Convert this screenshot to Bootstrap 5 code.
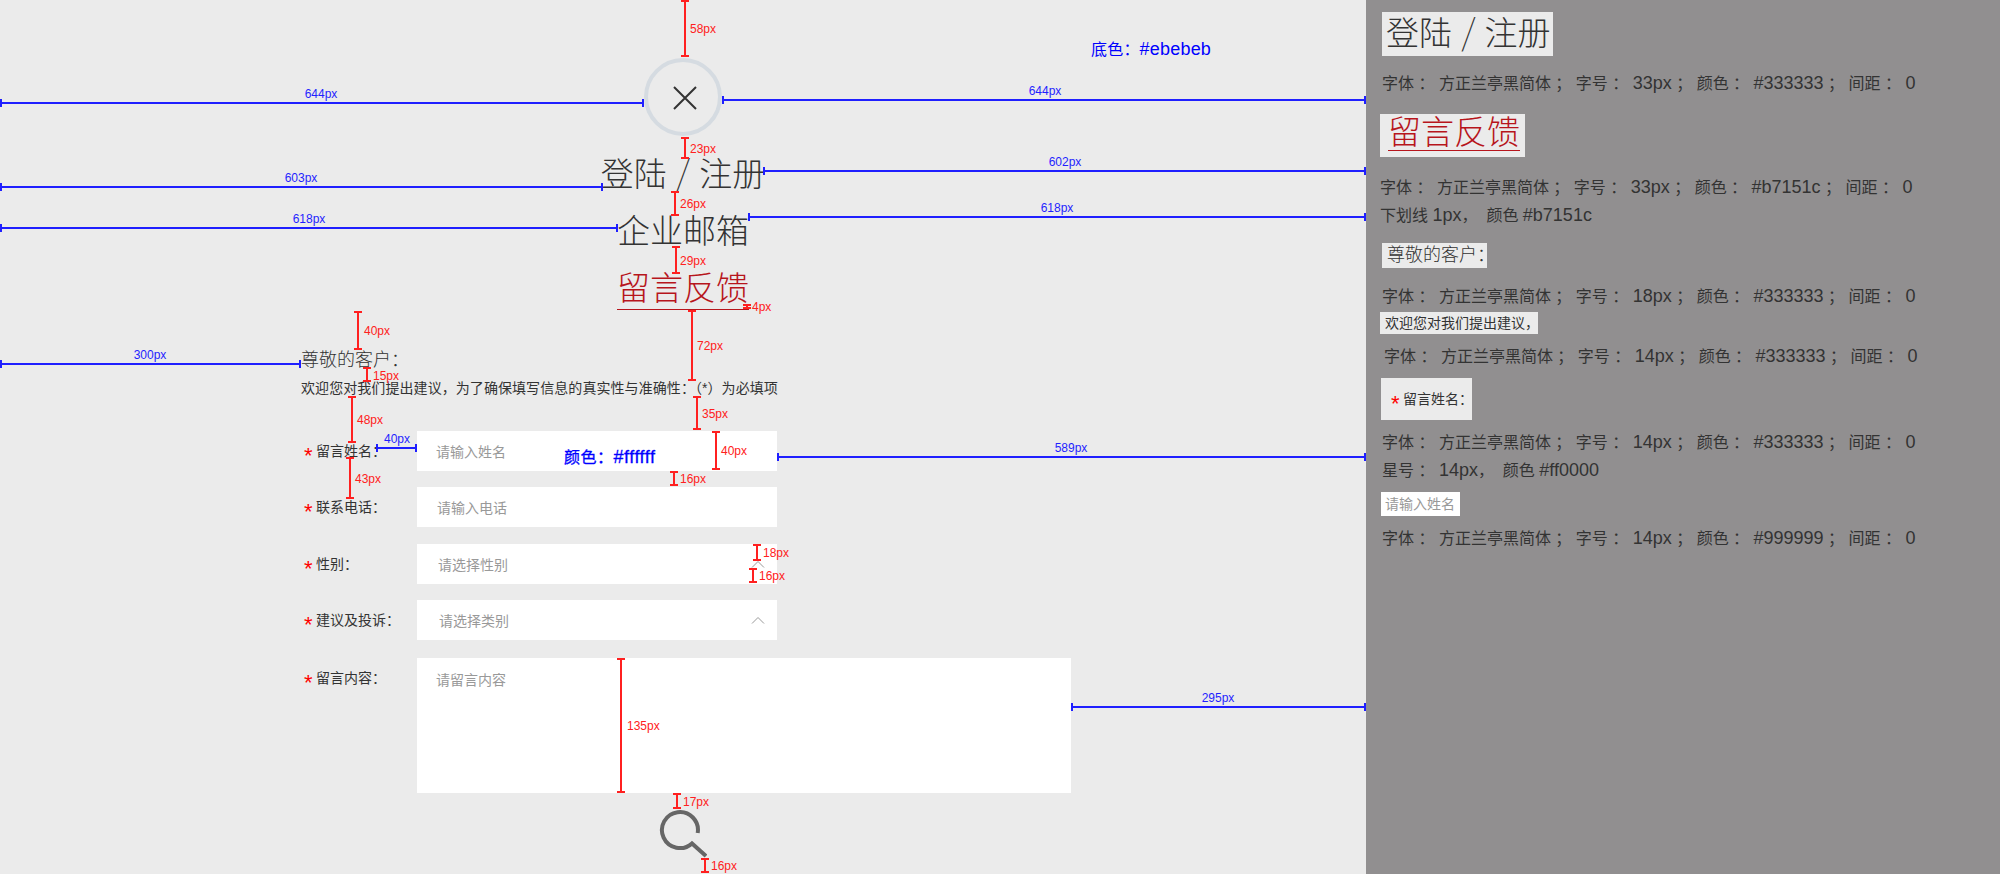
<!DOCTYPE html>
<html lang="zh-CN">
  <head>
    <meta charset="UTF-8" />
    <meta name="viewport" content="width=device-width, initial-scale=1.0" />
    <title>留言反馈标注</title>
    <link rel="stylesheet" href="https://cdn.jsdelivr.net/npm/bootstrap@5.3.3/dist/css/bootstrap.min.css" />
    <style>
      html, body { height: 874px; overflow: hidden; }
      body { font-family: "Liberation Sans", "Noto Sans CJK SC", sans-serif; color: #333; background: #918f90; }
      .spec-page { width: 2000px; height: 874px; }
      .latin { font-size: 18px; }

      /* 左边 */
      .design-pane { width: 1366px; height: 874px; flex: none; background: #ebebeb; padding-top: 58px; overflow: hidden; }
      .close-ring { width: 78px; height: 78px; border: 4px solid #d5dbe1; border-radius: 50%; padding: 2px 0 0 3px; }
      .big-title { font-size: 33px; line-height: 40px; height: 40px; font-weight: 300; color: #333; text-align: center; }
      .thin-slash { font-family: "Noto Sans CJK SC", sans-serif; font-size: 36px; font-weight: 100; line-height: 30px; }
      .title-login { margin-top: 19px; }
      .title-mail { margin-top: 17px; }
      .title-msg { margin-top: 18px; color: #b7151c; }
      .title-msg span { display: inline-block; line-height: 38px; height: 40px; border-bottom: 1px solid #b7151c; vertical-align: top; }
      .msg-form { margin: 38px 0 0 301px; }
      .greeting { font-size: 18px; line-height: 24px; font-weight: 300; margin: 0; }
      .intro { font-size: 14px; line-height: 20px; letter-spacing: 0.07px; margin: 6px 0 33px; }
      .form-line { margin-bottom: 16px; }
      .form-line.gap-17 { margin-bottom: 17px; }
      .form-line.gap-18 { margin-bottom: 18px; }
      .line-label { width: 116px; flex: none; font-size: 14px; padding: 1px 0 0 3px; }
      .star { display: inline-block; width: 12px; color: #f00; font-size: 22px; line-height: 14px; vertical-align: -7px; }
      .plain-input { width: 360px; height: 40px; border: 0; border-radius: 0; font-size: 14px; padding: 2px 19px 0; color: #999; background-color: #fff; font-family: inherit; }
      .plain-input::placeholder { color: #999; opacity: 1; }
      .plain-input.pad-20 { padding-left: 20px; }
      select.plain-input { padding-left: 21px; background-size: 14px 8px; background-position: right 12px center; }
      select.plain-input.pad-22 { padding-left: 22px; }
      .select-up { background-image: url("data:image/svg+xml,%3Csvg xmlns='http://www.w3.org/2000/svg' viewBox='0 0 14 8'%3E%3Cpath d='M1 7.5 7 1.5 13 7.5' fill='none' stroke='%23999' stroke-width='1'/%3E%3C/svg%3E"); }
      .plain-area { width: 654px; height: 135px; padding: 12px 19px; resize: none; }
      .area-label { padding-top: 10px; }
      .search-glyph { margin-top: 17px; }

      /* 右边 */
      .note-pane { flex: 1; padding: 12px 0 0 14px; }
      .note-line { font-size: 16px; line-height: 22px; height: 22px; color: #333; white-space: pre; }
      .chip { background: #ebebeb; color: #333; width: fit-content; white-space: nowrap; }
      .chip-login { width: 171px; height: 44px; font-size: 33px; line-height: 44px; font-weight: 300; padding-left: 4px; margin: 0 0 16px 2px; }
      .chip-msg { width: 145px; height: 43px; font-size: 33px; line-height: 36px; font-weight: 300; padding: 1px 0 0 8px; color: #b7151c; margin: 20px 0 19px; }
      .chip-msg span { display: inline-block; height: 36px; border-bottom: 1px solid #b7151c; vertical-align: top; }
      .chip-greet { width: 105px; height: 25px; font-size: 18px; line-height: 25px; font-weight: 300; padding-left: 5px; margin: 17px 0 17px 2px; }
      .chip-intro { width: 158px; height: 22px; font-size: 14px; line-height: 22px; padding-left: 5px; margin: 5px 0 11px; }
      .chip-label { width: 91px; height: 42px; font-size: 14px; line-height: 42px; padding-left: 10px; margin: 11px 0 11px 1px; }
      .chip-holder { width: 79px; height: 24px; font-size: 14px; line-height: 24px; padding-left: 4px; color: #999; background: #fff; margin: 11px 0 11px 1px; }
      .off-2 { margin-left: 2px; }
      .off-4 { margin-left: 4px; }
      .mt-note { margin-top: 6px; }

      /* 标注 */
      .mark-line, .mark-cap, .mark-text, .mark-note { position: absolute; }
      .mark-red { background: #ff2020; }
      .mark-blue { background: #1f1fff; }
      .mark-text { font-size: 12px; line-height: 14px; white-space: nowrap; }
      .mark-text.red { color: #ff2020; transform: translateY(-50%); }
      .mark-text.blue { color: #1f1fff; transform: translate(-50%, -50%); }
      .mark-note { color: #0000ff; font-size: 16px; line-height: 20px; white-space: nowrap; transform: translateY(-50%); }
      .note-base { left: 1091px; top: 49px; letter-spacing: 0.2px; }
      .note-white { left: 564px; top: 457px; letter-spacing: 0.5px; -webkit-text-stroke: 0.3px #0000ff; }
    </style>
  </head>
  <body>
    <div class="spec-page d-flex">
      <div class="design-pane position-relative" id="canvas">
        <div class="close-ring d-flex align-items-center justify-content-center mx-auto">
          <svg width="24" height="24" viewBox="0 0 24 24"><path d="M1 1 23 23M23 1 1 23" fill="none" stroke="#333" stroke-width="2" /></svg>
        </div>
        <div class="big-title title-login">登陆 <span class="thin-slash">/</span> 注册</div>
        <div class="big-title title-mail">企业邮箱</div>
        <div class="big-title title-msg"><span>留言反馈</span></div>

        <form class="msg-form">
          <p class="greeting">尊敬的客户：</p>
          <p class="intro">欢迎您对我们提出建议，为了确保填写信息的真实性与准确性：（*）为必填项</p>
          <div class="form-line d-flex align-items-center">
            <label class="line-label"><span class="star">*</span>留言姓名：</label>
            <input class="form-control plain-input" placeholder="请输入姓名" />
          </div>
          <div class="form-line gap-17 d-flex align-items-center">
            <label class="line-label"><span class="star">*</span>联系电话：</label>
            <input class="form-control plain-input pad-20" placeholder="请输入电话" />
          </div>
          <div class="form-line d-flex align-items-center">
            <label class="line-label"><span class="star">*</span>性别：</label>
            <select class="form-select plain-input select-up"><option>请选择性别</option></select>
          </div>
          <div class="form-line gap-18 d-flex align-items-center">
            <label class="line-label"><span class="star">*</span>建议及投诉：</label>
            <select class="form-select plain-input pad-22 select-up"><option>请选择类别</option></select>
          </div>
          <div class="d-flex align-items-start">
            <label class="line-label area-label"><span class="star">*</span>留言内容：</label>
            <textarea class="form-control plain-input plain-area" placeholder="请留言内容"></textarea>
          </div>
        </form>

        <svg class="search-glyph d-block mx-auto" width="48" height="48" viewBox="0 0 48 48">
          <path d="M38.7 23A18 18 0 1 0 33 33.4L47 46" fill="none" stroke="#666" stroke-width="4" />
        </svg>

        <div class="mark-note note-base">底色：<span class="latin">#ebebeb</span></div>
        <div class="mark-note note-white">颜色：<span class="latin">#ffffff</span></div>
      </div>

      <div class="note-pane">
        <div class="chip chip-login">登陆 <span class="thin-slash">/</span> 注册</div>
        <div class="note-line off-2">字体 ： 方正兰亭黑简体 ； 字号 ： <span class="latin">33px</span> ； 颜色 ： <span class="latin">#333333</span> ； 间距 ： <span class="latin">0</span></div>
        <div class="chip chip-msg"><span>留言反馈</span></div>
        <div class="note-line">字体 ： 方正兰亭黑简体 ； 字号 ： <span class="latin">33px</span> ； 颜色 ： <span class="latin">#b7151c</span> ； 间距 ： <span class="latin">0</span></div>
        <div class="note-line mt-note">下划线 <span class="latin">1px</span>，  颜色 <span class="latin">#b7151c</span></div>
        <div class="chip chip-greet">尊敬的客户：</div>
        <div class="note-line off-2">字体 ： 方正兰亭黑简体 ； 字号 ： <span class="latin">18px</span> ； 颜色 ： <span class="latin">#333333</span> ； 间距 ： <span class="latin">0</span></div>
        <div class="chip chip-intro">欢迎您对我们提出建议，</div>
        <div class="note-line off-4">字体 ： 方正兰亭黑简体 ； 字号 ： <span class="latin">14px</span> ； 颜色 ： <span class="latin">#333333</span> ； 间距 ： <span class="latin">0</span></div>
        <div class="chip chip-label"><span class="star">*</span>留言姓名：</div>
        <div class="note-line off-2">字体 ： 方正兰亭黑简体 ； 字号 ： <span class="latin">14px</span> ； 颜色 ： <span class="latin">#333333</span> ； 间距 ： <span class="latin">0</span></div>
        <div class="note-line off-2 mt-note">星号 ： <span class="latin">14px</span>，  颜色 <span class="latin">#ff0000</span></div>
        <div class="chip chip-holder">请输入姓名</div>
        <div class="note-line off-2">字体 ： 方正兰亭黑简体 ； 字号 ： <span class="latin">14px</span> ； 颜色 ： <span class="latin">#999999</span> ； 间距 ： <span class="latin">0</span></div>
      </div>
    </div>

    <script src="https://cdn.jsdelivr.net/npm/bootstrap@5.3.3/dist/js/bootstrap.bundle.min.js"></script>
    <script>
      // x1, x2, y, text, text x, text y
      const blueMarks = [
        [0, 644, 103, "644px", 321, 94],
        [722, 1366, 100, "644px", 1045, 91],
        [0, 603, 187, "603px", 301, 178],
        [763, 1366, 171, "602px", 1065, 162],
        [0, 618, 228, "618px", 309, 219],
        [748, 1366, 217, "618px", 1057, 208],
        [0, 301, 364, "300px", 150, 355],
        [376, 417, 448, "40px", 397, 439],
        [777, 1366, 457, "589px", 1071, 448],
        [1071, 1366, 707, "295px", 1218, 698],
      ];
      // x, y1, y2, text, text x, text y
      const redMarks = [
        [685, 0, 57, "58px", 690, 29],
        [685, 137, 159, "23px", 690, 149],
        [675, 191, 216, "26px", 680, 204],
        [676, 246, 274, "29px", 680, 261],
        [747, 304, 309, "4px", 752, 307],
        [358, 311, 350, "40px", 364, 331],
        [367, 367, 382, "15px", 373, 376],
        [352, 396, 443, "48px", 357, 420],
        [350, 457, 499, "43px", 355, 479],
        [692, 310, 381, "72px", 697, 346],
        [697, 396, 430, "35px", 702, 414],
        [716, 431, 470, "40px", 721, 451],
        [674, 471, 486, "16px", 680, 479],
        [757, 544, 561, "18px", 763, 553],
        [753, 568, 583, "16px", 759, 576],
        [621, 658, 793, "135px", 627, 726],
        [677, 793, 809, "17px", 683, 802],
        [705, 858, 873, "16px", 711, 866],
      ];
      const canvas = document.getElementById("canvas");

      function addBox(cls, x, y, w, h) {
        const el = document.createElement("div");
        el.className = cls;
        el.style.cssText = `left:${x}px;top:${y}px;width:${w}px;height:${h}px`;
        canvas.appendChild(el);
      }
      function addText(cls, x, y, text) {
        const el = document.createElement("div");
        el.className = cls;
        el.style.cssText = `left:${x}px;top:${y}px`;
        el.textContent = text;
        canvas.appendChild(el);
      }

      blueMarks.forEach(([x1, x2, y, text, tx, ty]) => {
        addBox("mark-line mark-blue", x1, y - 1, x2 - x1, 2);
        addBox("mark-cap mark-blue", x1, y - 4, 2, 8);
        addBox("mark-cap mark-blue", x2 - 2, y - 4, 2, 8);
        addText("mark-text blue", tx, ty, text);
      });
      redMarks.forEach(([x, y1, y2, text, tx, ty]) => {
        addBox("mark-line mark-red", x - 1, y1, 2, y2 - y1);
        addBox("mark-cap mark-red", x - 4, y1, 8, 2);
        addBox("mark-cap mark-red", x - 4, y2 - 2, 8, 2);
        addText("mark-text red", tx, ty, text);
      });
    </script>
  </body>
</html>
